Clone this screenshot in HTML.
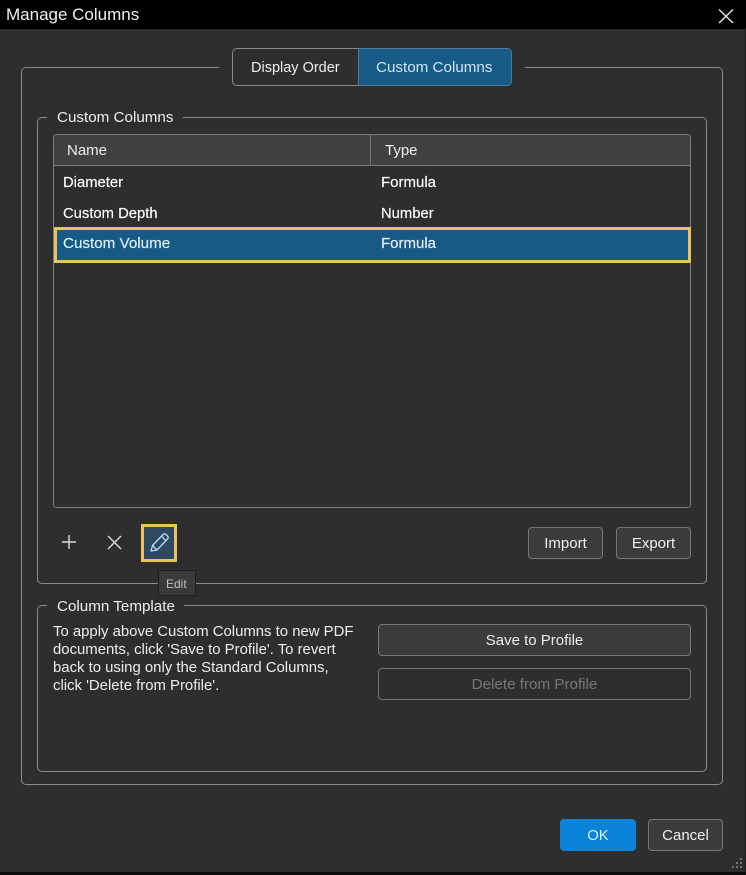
<!DOCTYPE html>
<html><head><meta charset="utf-8"><style>
html,body{margin:0;padding:0;background:#2e2e2e}
#r{position:relative;width:746px;height:875px;overflow:hidden;background:#2e2e2e;font-family:"Liberation Sans",sans-serif;font-size:14.8px;color:#eee}
#r div{position:absolute;box-sizing:border-box}
.t{white-space:nowrap;line-height:18px}
.b{-webkit-text-stroke:.15px currentColor}
.box{border:1.5px solid #8a8a8a;border-radius:5px}
.gap{background:#2e2e2e;height:5px}
.btn{background:#3c3c3c;border:1.5px solid #777;border-radius:4px;text-align:center;color:#eee}
</style></head><body><div id="r">
<div style="left:0;top:0;width:746px;height:29px;background:#000"></div>
<div class="t" style="left:6px;top:6px;font-size:17px;color:#f0f0f0">Manage Columns</div>
<svg style="position:absolute;left:718px;top:8px" width="16" height="16"><path d="M1 1.500L15 15M15 1.500L1 15" stroke="#eee" stroke-width="1.3" fill="none"/></svg>

<div class="box" style="left:21px;top:67px;width:702px;height:718px"></div>
<div class="gap" style="left:219px;top:65px;width:306px"></div>
<div style="left:232px;top:48px;width:127px;height:38px;border:1.5px solid #8a8a8a;border-right:0;border-radius:5px 0 0 5px;background:#2e2e2e"></div>
<div style="left:358px;top:48px;width:154px;height:38px;background:#175a86;border:1.5px solid #4f7d9c;border-radius:0 5px 5px 0"></div>
<div class="t" style="left:251px;top:59px;font-size:14.500px">Display Order</div>
<div class="t" style="left:376px;top:59px;color:#cfe6f5;font-size:15.200px">Custom Columns</div>

<div class="box" style="left:37px;top:117px;width:670px;height:467px"></div>
<div class="gap" style="left:47px;top:115px;width:136px"></div>
<div class="t" style="left:57px;top:109px;font-size:15.200px">Custom Columns</div>

<div style="left:53px;top:134px;width:638px;height:374px;border:1.5px solid #7c7c7c;border-radius:3px"></div>
<div style="left:54px;top:135px;width:636px;height:31px;background:#414141;border-bottom:1.5px solid #7c7c7c;border-radius:3px 3px 0 0"></div>
<div style="left:370px;top:135px;width:1px;height:31px;background:#777"></div>
<div class="t" style="left:67px;top:142px;font-size:15px">Name</div>
<div class="t" style="left:385px;top:142px;font-size:15px">Type</div>
<div class="t b" style="left:63px;top:174px;color:#fff">Diameter</div>
<div class="t b" style="left:381px;top:174px;color:#fff;font-size:15px">Formula</div>
<div class="t b" style="left:63px;top:205px;color:#fff">Custom Depth</div>
<div class="t b" style="left:381px;top:205px;color:#fff">Number</div>
<div style="left:54px;top:227px;width:637px;height:36px;background:#175a86;border:3px solid #e9c45f"></div>
<div class="t b" style="left:63px;top:235px;color:#dff2ff;font-size:15.200px">Custom Volume</div>
<div class="t b" style="left:381px;top:235px;color:#eef;font-size:15px">Formula</div>

<svg style="position:absolute;left:60px;top:533px" width="18" height="18"><path d="M9 2V16M2 9H16" stroke="#ddd" stroke-width="1.4" fill="none"/></svg>
<svg style="position:absolute;left:106px;top:534px" width="17" height="17"><path d="M2 2L15 15M15 2L2 15" stroke="#ddd" stroke-width="1.4" fill="none"/></svg>
<div style="left:141px;top:524px;width:36px;height:38px;background:#2d4a60;border:3px solid #e9c45f"></div>
<svg style="position:absolute;left:148px;top:531px" width="23" height="22"><path d="M3 20L4.500 14.500L15 3.500Q16.500 2 18 3.500L19.500 5Q21 6.500 19.500 8L9 19ZM4.500 14.500L9 19M13.500 5L17.500 9.500" stroke="#b9dcf2" stroke-width="1.3" fill="none" stroke-linejoin="round"/></svg>
<div style="left:158px;top:570px;width:38px;height:26px;background:#3a3a3a;border:1px solid #1d1d1d"></div>
<div class="t" style="left:166px;top:575px;font-size:12px;color:#c2c2c2">Edit</div>

<div class="btn t" style="left:528px;top:527px;width:75px;height:32px;line-height:31px;font-size:15px">Import</div>
<div class="btn t" style="left:616px;top:527px;width:75px;height:32px;line-height:31px;font-size:15px">Export</div>

<div class="box" style="left:37px;top:605px;width:670px;height:167px"></div>
<div class="gap" style="left:47px;top:603px;width:137px"></div>
<div class="t" style="left:57px;top:598px;font-size:15.200px">Column Template</div>
<div class="t" style="left:53px;top:623px;color:#eee;font-size:14.900px">To apply above Custom Columns to new PDF<br>documents, click 'Save to Profile'. To revert<br>back to using only the Standard Columns,<br>click 'Delete from Profile'.</div>
<div class="btn t" style="left:378px;top:624px;width:313px;height:32px;line-height:31px;font-size:15px">Save to Profile</div>
<div class="btn t" style="left:378px;top:668px;width:313px;height:32px;line-height:31px;background:#2e2e2e;color:#777;font-size:15.200px">Delete from Profile</div>

<div class="t" style="left:560px;top:819px;width:76px;height:32px;line-height:34px;background:#0a84d8;border-radius:4px;text-align:center;color:#d8f0ff">OK</div>
<div class="btn t" style="left:648px;top:819px;width:75px;height:32px;line-height:31px;font-size:15px">Cancel</div>

<svg style="position:absolute;left:730px;top:857px" width="14" height="14"><path d="M10 1h2v2h-2zM10 5h2v2h-2zM6 5h2v2H6zM10 9h2v2h-2zM6 9h2v2H6zM2 9h2v2H2z" fill="#777"/></svg>
<div style="left:0;top:872px;width:746px;height:3px;background:#0c0c0c"></div>
<div style="left:745px;top:29px;width:1px;height:846px;background:#1a1a1a"></div>
</div></body></html>
